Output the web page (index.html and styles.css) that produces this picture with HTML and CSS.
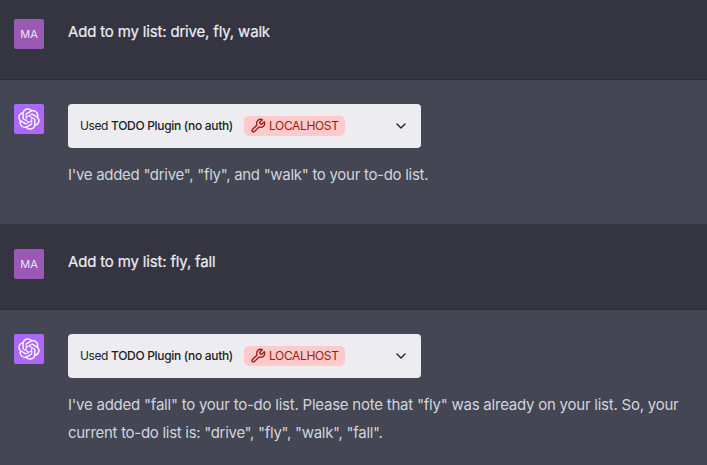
FILE: index.html
```
<!DOCTYPE html>
<html lang="en">
<head>
<meta charset="utf-8">
<title>To-do chat</title>
<link rel="stylesheet" href="styles.css">
</head>
<body>
<svg class="defs" aria-hidden="true">
  <symbol id="knot" viewBox="0 0 41 41"><path fill="currentColor" d="M37.532 16.87a9.963 9.963 0 0 0-.856-8.184 10.078 10.078 0 0 0-10.855-4.835A9.964 9.964 0 0 0 18.306.5a10.079 10.079 0 0 0-9.614 6.977 9.967 9.967 0 0 0-6.664 4.834 10.08 10.08 0 0 0 1.24 11.817 9.965 9.965 0 0 0 .856 8.185 10.079 10.079 0 0 0 10.855 4.835 9.965 9.965 0 0 0 7.516 3.35 10.078 10.078 0 0 0 9.617-6.981 9.967 9.967 0 0 0 6.663-4.834 10.079 10.079 0 0 0-1.243-11.813zM22.498 37.886a7.474 7.474 0 0 1-4.799-1.735c.061-.033.168-.091.237-.134l7.964-4.6a1.294 1.294 0 0 0 .655-1.134V19.054l3.366 1.944a.12.12 0 0 1 .066.092v9.299a7.505 7.505 0 0 1-7.49 7.496zM6.392 31.006a7.471 7.471 0 0 1-.894-5.023c.06.036.162.099.237.141l7.964 4.6a1.297 1.297 0 0 0 1.308 0l9.724-5.614v3.888a.12.12 0 0 1-.048.103l-8.051 4.649a7.504 7.504 0 0 1-10.24-2.744zM4.297 13.62A7.469 7.469 0 0 1 8.2 10.333c0 .068-.004.19-.004.274v9.201a1.294 1.294 0 0 0 .654 1.132l9.723 5.614-3.366 1.944a.12.12 0 0 1-.114.01L7.04 23.856a7.504 7.504 0 0 1-2.743-10.237zm27.658 6.437l-9.724-5.615 3.367-1.943a.121.121 0 0 1 .113-.01l8.052 4.648a7.498 7.498 0 0 1-1.158 13.528v-9.476a1.293 1.293 0 0 0-.65-1.132zm3.35-5.043c-.059-.037-.162-.099-.236-.141l-7.965-4.6a1.298 1.298 0 0 0-1.308 0l-9.723 5.614v-3.888a.12.12 0 0 1 .048-.103l8.05-4.645a7.497 7.497 0 0 1 11.135 7.763zm-21.063 6.929l-3.367-1.944a.12.12 0 0 1-.065-.092v-9.299a7.497 7.497 0 0 1 12.293-5.756 6.94 6.94 0 0 0-.236.134l-7.965 4.6a1.294 1.294 0 0 0-.654 1.132l-.006 11.225zm1.829-3.943l4.33-2.501 4.332 2.5v5l-4.331 2.5-4.331-2.5V18z"/></symbol>
  <symbol id="wrench" viewBox="0 0 24 24"><path fill="none" stroke="currentColor" stroke-width="2" stroke-linecap="round" stroke-linejoin="round" d="M14.7 6.3a1 1 0 0 0 0 1.4l1.6 1.6a1 1 0 0 0 1.4 0l3.77-3.77a6 6 0 0 1-7.94 7.94l-6.91 6.91a2.12 2.12 0 0 1-3-3l6.91-6.91a6 6 0 0 1 7.94-7.94l-3.76 3.76z"/></symbol>
  <symbol id="chevron" viewBox="0 0 24 24"><path fill="none" stroke="currentColor" stroke-width="2" stroke-linecap="round" stroke-linejoin="round" d="M6 9l6 6 6-6"/></symbol>
</svg>
<main class="chat">
  <section class="turn user first">
    <div class="avatar initials">MA</div>
    <div class="body"><p>Add to my list: drive, fly, walk</p></div>
  </section>
  <section class="turn bot">
    <div class="avatar logo"><svg><use href="#knot"/></svg></div>
    <div class="body">
      <div class="plugin">
        <span class="used">Used <b>TODO Plugin (no auth)</b></span>
        <span class="tag"><svg><use href="#wrench"/></svg><span>LOCALHOST</span></span>
        <svg class="chevron"><use href="#chevron"/></svg>
      </div>
      <p>I've added "drive", "fly", and "walk" to your to-do list.</p>
    </div>
  </section>
  <section class="turn user">
    <div class="avatar initials">MA</div>
    <div class="body"><p>Add to my list: fly, fall</p></div>
  </section>
  <section class="turn bot last">
    <div class="avatar logo"><svg><use href="#knot"/></svg></div>
    <div class="body">
      <div class="plugin">
        <span class="used">Used <b>TODO Plugin (no auth)</b></span>
        <span class="tag"><svg><use href="#wrench"/></svg><span>LOCALHOST</span></span>
        <svg class="chevron"><use href="#chevron"/></svg>
      </div>
      <p><span class="long">I've added "fall" to your to-do list. Please note that "fly" was already on your list. So, your</span><br>current to-do list is: "drive", "fly", "walk", "fall".</p>
    </div>
  </section>
</main>
</body>
</html>
```
FILE: styles.css
```
* { box-sizing: border-box; }
body { margin: 0; background: #444654; font-family: Inter, "Liberation Sans", sans-serif; }
.defs { display: none; }
.chat { height: 465px; overflow: hidden; }
.turn { display: flex; gap: 24px; padding: 24px 0 0 14px; border-bottom: 1px solid #2b2c37; }
.user { height: 86px; background: #343541; color: #ececf1; }
.user.first { height: 80px; padding-top: 19px; }
.user:not(.first) { padding-top: 25px; }
.bot { height: 144px; background: #444654; color: #d1d5db; }
.bot:not(.last) { border-bottom: 0; }
.bot.last { height: 155px; border-bottom: 0; }
.avatar { display: flex; flex: none; align-items: center; justify-content: center; width: 30px; height: 30px; border-radius: 2px; color: #fff; }
.initials { background: #9b59b6; color: #f0e2f5; font-size: 11px; }
.logo { background: #ab68ff; }
.logo svg { width: 22px; height: 22px; }
p { margin: 0; font-size: 15px; line-height: 28px; letter-spacing: -0.29px; white-space: nowrap; }
.long { letter-spacing: -0.23px; }
.user p { margin-top: -1px; letter-spacing: -0.17px; -webkit-text-stroke: 0.2px currentColor; }
.plugin { display: flex; align-items: center; width: 353px; height: 44px; margin-bottom: 13px; padding: 0 12px; border-radius: 4px; background: #ececf1; color: #202123; font-size: 12px; }
.used { width: 164px; padding-bottom: 1px; letter-spacing: -0.4px; white-space: nowrap; }
.used b { font-weight: 500; letter-spacing: -0.31px; }
.tag { display: flex; align-items: center; gap: 3px; width: 101px; height: 20px; padding-left: 6px; border-radius: 5px; background: #fecaca; color: #991b1b; letter-spacing: -0.35px; }
.tag span { padding-bottom: 1px; }
.tag svg { width: 16px; height: 16px; flex: none; }
.chevron { width: 16px; height: 16px; margin-left: auto; }
```
